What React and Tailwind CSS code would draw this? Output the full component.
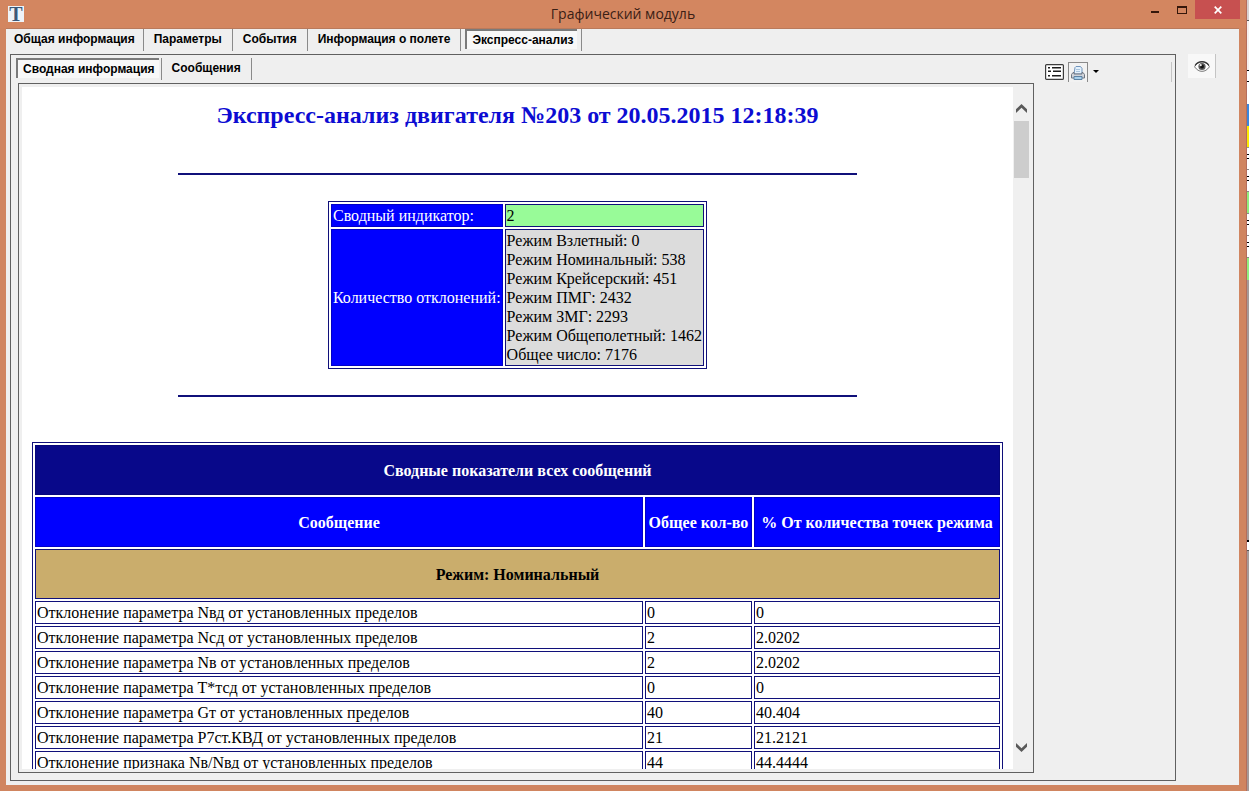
const mainTabs = ['Общая информация', 'Параметры', 'События', 'Информация о полете', 'Экспресс-анализ'];
const subTabs = ['Сводная информация', 'Сообщения'];

const counters = [
  ['Режим Взлетный', '0'],
  ['Режим Номинальный', '538'],
  ['Режим Крейсерский', '451'],
  ['Режим ПМГ', '2432'],
  ['Режим ЗМГ', '2293'],
  ['Режим Общеполетный', '1462'],
  ['Общее число', '7176'],
];

const rows = [
  ['Отклонение параметра Nвд от установленных пределов', '0', '0'],
  ['Отклонение параметра Nсд от установленных пределов', '2', '2.0202'],
  ['Отклонение параметра Nв от установленных пределов', '2', '2.0202'],
  ['Отклонение параметра T*тсд от установленных пределов', '0', '0'],
  ['Отклонение параметра Gт от установленных пределов', '40', '40.404'],
  ['Отклонение параметра Р7ст.КВД от установленных пределов', '21', '21.2121'],
  ['Отклонение признака Nв/Nвд от установленных пределов', '44', '44.4444'],
];

function Tab({ label, selected }) {
  return (
    <div className="flex h-[22px] items-start border-r border-[#8a8a8a] px-1 first:px-0.5">
      <button
        type="button"
        role="tab"
        aria-selected={selected}
        className={
          selected
            ? 'h-5 border-l-2 border-t-2 border-[#7a7a7a] bg-[#f8f8f8] pl-[5px] pr-1 text-[12px] font-bold leading-[18px] text-black'
            : 'h-5 px-1.5 text-[12px] font-bold leading-5 text-black'
        }
      >
        {label}
      </button>
    </div>
  );
}

function Tabs({ items, active, label }) {
  return (
    <div role="tablist" aria-label={label} className="flex shrink-0">
      {items.map((item, i) => (
        <Tab key={item} label={item} selected={i === active} />
      ))}
    </div>
  );
}

function TitleBar() {
  return (
    <header className="flex h-7 shrink-0 items-start bg-[#d38660]">
      <div className="flex h-7 w-[140px] items-center pl-2">
        <span className="flex h-4 w-4 items-center justify-center bg-[#eef3f8] font-['Liberation_Serif',serif] text-[20px] font-bold leading-4 text-[#3b5878]">
          T
        </span>
      </div>
      <h1 className="flex-1 text-center font-['Open_Sans',sans-serif] text-[14px] leading-7 text-[#3a2015]">
        Графический модуль
      </h1>
      <div className="flex w-[140px] justify-end pr-1.5">
        <button type="button" aria-label="Свернуть" className="flex h-[19px] w-7 items-center justify-center">
          <svg width="10" height="12" viewBox="0 0 10 12">
            <path d="M1 7h8v2H1z" fill="#35170b" />
          </svg>
        </button>
        <button type="button" aria-label="Развернуть" className="flex h-[19px] w-[26px] items-center justify-center">
          <svg width="10" height="8" viewBox="0 0 10 8">
            <path d="M0 0h10v8H0zM1 2v5h8V2z" fill="#35170b" fillRule="evenodd" />
          </svg>
        </button>
        <button type="button" aria-label="Закрыть" className="flex h-[19px] w-[45px] items-center justify-center bg-[#c75050]">
          <svg width="8" height="8" viewBox="0 0 8 8">
            <path d="M.7.7l6.600 6.600M7.300.7L.7 7.300" stroke="#fff" strokeWidth="1.7" />
          </svg>
        </button>
      </div>
    </header>
  );
}

function Toolbar() {
  return (
    <div className="flex items-start pt-[7px]">
      <button type="button" aria-label="Список" className="flex h-5 w-[19px] items-center">
        <svg width="19" height="16" viewBox="0 0 19 16">
          <rect x=".6" y=".6" width="17.800" height="14.800" rx="1" fill="#fff" stroke="#3c3c3c" strokeWidth="1.2" />
          <g fill="#1c1c1c">
            <path d="M3 3h2v1.500H3zM3 6.500h3V8H3zM3 11h2v1.500H3z" />
            <path d="M7 3h9v1.500H7zM8 6.500h8V8H8zM7 11h9v1.500H7z" />
          </g>
        </svg>
      </button>
      <button type="button" aria-label="Печать" className="ml-1 flex h-5 w-5 items-center justify-center border border-b-0 border-[#8a8a8a] bg-[#f2f2f2]">
        <svg width="14" height="14" viewBox="0 0 14 14">
          <path d="M4 1.500L5 .5h4.500L11 2.500V8H3z" fill="#e4f1fc" stroke="#6f93bb" />
          <path d="M5 3.500h4M5 5.500h4" stroke="#a9c4dd" />
          <path d="M.5 8.500L2 6.500h1V8h8V6.500h1l1.500 2V12H.5z" fill="#cfd3da" stroke="#6e7681" />
          <path d="M3 10.500h8v3H3z" fill="#a8d0ec" stroke="#5c83a5" />
        </svg>
      </button>
      <button type="button" aria-label="Параметры печати" className="ml-1 flex h-[18px] w-2 items-center justify-center">
        <svg width="6" height="3" viewBox="0 0 6 3">
          <path d="M0 0h6L3 3z" fill="#000" />
        </svg>
      </button>
      <div className="ml-auto mr-[3px] h-5 w-px bg-[#c4c4c4]" />
    </div>
  );
}

function Rule() {
  return <hr className="mx-auto h-0.5 w-[70%] border-0 bg-[#10107a]" />;
}

function Report() {
  return (
    <article
      tabIndex={0}
      className="min-w-0 flex-1 overflow-y-auto bg-white px-2.5 pt-3.5 font-['Liberation_Serif',serif] text-[16px] leading-[19px] text-black outline-none [scrollbar-width:none]"
    >
      <h2 className="mb-11 text-center text-[24px] font-bold leading-7 text-[#0c0cd2]">
        Экспресс-анализ двигателя №203 от 20.05.2015 12:18:39
      </h2>
      <Rule />
      <table className="mx-auto my-[26px] border-separate border-spacing-[2px] border border-[#10107a]">
        <tbody>
          <tr>
            <th scope="row" className="border border-[#0000c8] bg-[#0000ff] p-px text-left font-normal text-white">
              Сводный индикатор:
            </th>
            <td className="border border-[#10107a] bg-[#98fb98] p-px">2</td>
          </tr>
          <tr>
            <th scope="row" className="border border-[#0000c8] bg-[#0000ff] p-px text-left font-normal text-white">
              Количество отклонений:
            </th>
            <td className="border border-[#10107a] bg-[#dcdcdc] p-px">
              {counters.map(([name, value]) => (
                <div key={name}>
                  {name}: {value}
                </div>
              ))}
            </td>
          </tr>
        </tbody>
      </table>
      <Rule />
      <table className="mt-[45px] w-full table-fixed border-separate border-spacing-[2px] border border-[#10107a]">
        <colgroup>
          <col />
          <col className="w-[107px]" />
          <col className="w-[246px]" />
        </colgroup>
        <thead>
          <tr className="h-[50px] text-white">
            <th colSpan={3} className="border border-[#06067a] bg-[#08088a] p-px">
              Сводные показатели всех сообщений
            </th>
          </tr>
          <tr className="h-[50px] text-white">
            <th className="border border-[#0000c8] bg-[#0000ff] p-px">Сообщение</th>
            <th className="whitespace-nowrap border border-[#0000c8] bg-[#0000ff] p-px">Общее кол-во</th>
            <th className="whitespace-nowrap border border-[#0000c8] bg-[#0000ff] p-px">% От количества точек режима</th>
          </tr>
        </thead>
        <tbody>
          <tr className="h-[50px]">
            <th colSpan={3} className="border border-[#10107a] bg-[#caad6c] p-px">
              Режим: Номинальный
            </th>
          </tr>
          {rows.map(([name, total, percent]) => (
            <tr key={name}>
              <td className="border border-[#10107a] p-px">{name}</td>
              <td className="border border-[#10107a] p-px">{total}</td>
              <td className="border border-[#10107a] p-px">{percent}</td>
            </tr>
          ))}
        </tbody>
      </table>
    </article>
  );
}

function ScrollBar() {
  return (
    <div className="flex w-[17px] shrink-0 flex-col items-center bg-[#f0f0f0] py-[17px]">
      <button type="button" aria-label="Прокрутить вверх" className="flex h-[17px] w-[15px] shrink-0 justify-center">
        <svg width="11" height="9" viewBox="0 0 11 9">
          <path d="M0 9V5.200L5.500 0 11 5.200V9L5.500 3.700z" fill="#5a5a5a" />
        </svg>
      </button>
      <div className="h-[57px] w-[15px] bg-[#cdcdcd]" />
      <button type="button" aria-label="Прокрутить вниз" className="mt-auto flex h-[9px] w-[15px] shrink-0 justify-center">
        <svg width="11" height="9" viewBox="0 0 11 9">
          <path d="M0 0v3.800L5.500 9 11 3.800V0L5.500 5.300z" fill="#5a5a5a" />
        </svg>
      </button>
    </div>
  );
}

function BackdropEdge() {
  return (
    <div aria-hidden="true" className="flex w-0.5 shrink-0 flex-col bg-[#a59a99]">
      <div className="h-[21px] border-b border-[#555] bg-[#d8d2d0]" />
      <div className="h-[49px] bg-[#f6efee]" />
      <div className="h-3 border-y border-black bg-white" />
      <div className="h-[22px] bg-white" />
      <div className="h-[22px] bg-[#3a86dc]" />
      <div className="h-[22px] border-b border-[#998] bg-[#fbea00]" />
      <div className="h-[22px] border-b border-[#888] bg-white pt-1.5">
        <div className="h-[5px] border-y border-black" />
      </div>
      <div className="h-[22px] border-b border-[#888] bg-white pt-1.5">
        <div className="h-[5px] border-y border-black" />
      </div>
      <div className="h-[22px] border-b border-[#888] bg-[#90ee80]" />
      <div className="h-[22px] border-b border-[#888] bg-white pt-1.5">
        <div className="h-[5px] border-y border-black" />
      </div>
      <div className="h-[22px] border-b border-[#888] bg-white pt-1.5">
        <div className="h-[5px] border-y border-black" />
      </div>
      <div className="h-[22px] bg-[#90ee80]" />
      <div className="mt-[260px] h-[11px] border-b border-t-2 border-b-[#555] border-t-black bg-white" />
    </div>
  );
}

export default function App() {
  return (
    <div className="flex h-screen bg-[#f0f0f0] font-['Liberation_Sans',Arial,sans-serif]">
      <div className="flex min-w-0 flex-1 flex-col border-r border-[#b56e5c] bg-[#d08560]">
        <TitleBar />
        <div className="mb-1.5 ml-1.5 mr-[7px] flex min-h-0 flex-1 border-t border-[#b97a5c] bg-[#efefef]">
          <main className="flex min-w-0 flex-1 flex-col pb-1 pl-1">
            <div className="-ml-1 h-[25px]">
              <Tabs items={mainTabs} active={4} label="Разделы" />
            </div>
            <section className="flex min-h-0 flex-1 border border-[#606060] pb-[7px] pl-[7px]">
              <div className="flex min-w-0 flex-1 flex-col">
                <div className="-ml-1 h-7 pt-[3px]">
                  <Tabs items={subTabs} active={0} label="Экспресс-анализ" />
                </div>
                <div className="flex min-h-0 flex-1 border border-[#606060] p-[3px]">
                  <Report />
                  <ScrollBar />
                </div>
              </div>
              <aside className="w-[141px] shrink-0 pl-[11px]">
                <Toolbar />
              </aside>
            </section>
          </main>
          <aside className="w-[63px] shrink-0 pl-3 pt-[25px]">
            <button type="button" aria-label="Показать" className="flex h-6 w-7 items-center justify-center border-r border-[#c4c4c4] bg-[#f8f8f8]">
              <svg width="16" height="11" viewBox="0 0 16 11">
                <path d="M.5 5.800C2.500 2.500 5 1 8 1s5.500 1.500 7.500 4.800C13 9 11 10.300 8 10.300S3 9 .5 5.800z" fill="#fff" stroke="#666" strokeWidth=".9" />
                <path d="M1 4.500C3 1.500 5.500.6 8 .6s5 .9 7 3.900" fill="none" stroke="#333" strokeWidth="1.2" />
                <circle cx="8" cy="5.500" r="3.600" fill="#5a5a5a" />
                <circle cx="8" cy="5.500" r="2" fill="#151515" />
                <circle cx="6.700" cy="4.200" r="1.100" fill="#e8e8e8" />
              </svg>
            </button>
          </aside>
        </div>
      </div>
      <BackdropEdge />
    </div>
  );
}
